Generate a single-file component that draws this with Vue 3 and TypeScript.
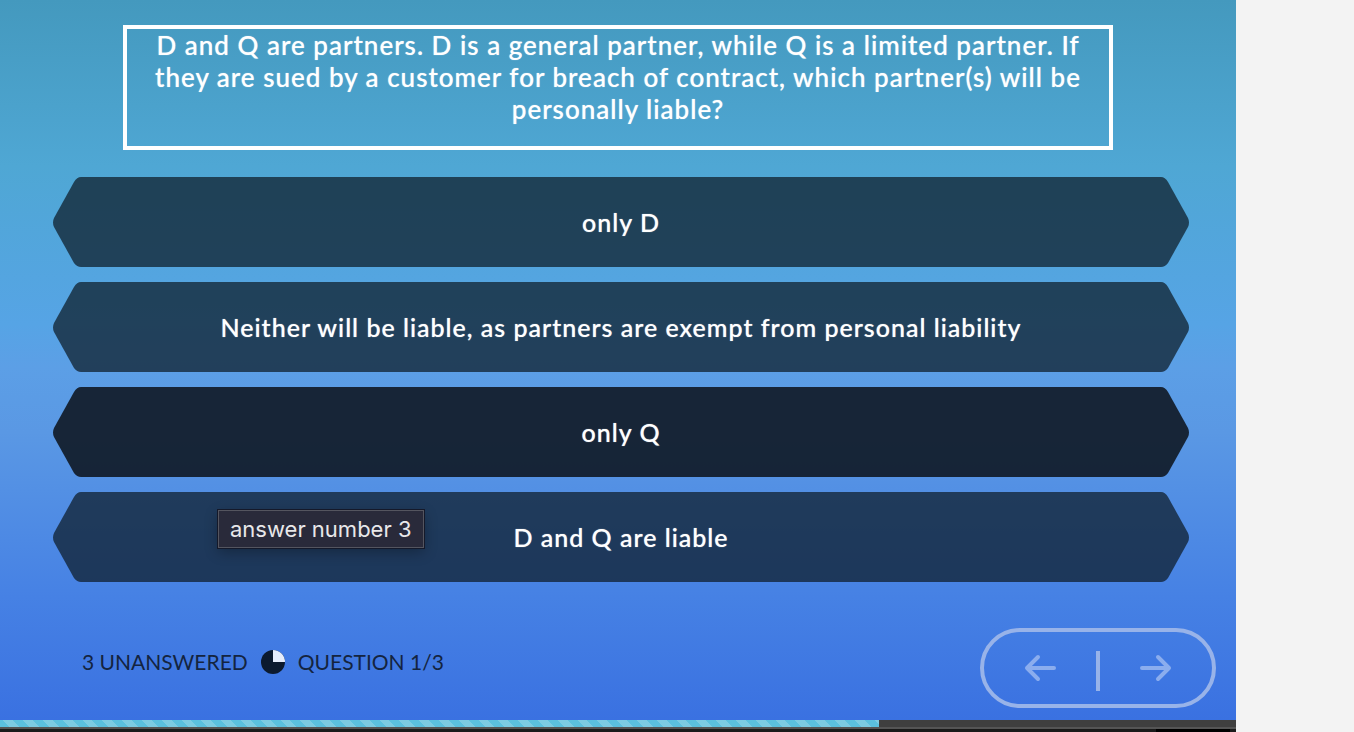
<script setup lang="ts">
import { ref } from 'vue'

const question =
  'D and Q are partners. D is a general partner, while Q is a limited partner. If they are sued by a customer for breach of contract, which partner(s) will be personally liable?'

const answers: string[] = [
  'only D',
  'Neither will be liable, as partners are exempt from personal liability',
  'only Q',
  'D and Q are liable',
]

const active = ref(2)
const progress = ref(71.1)
</script>

<template>
  <div class="page">
    <main class="stage">
      <section class="quiz">
        <h1 class="question">{{ question }}</h1>

        <div class="answers">
          <button
            v-for="(answer, index) in answers"
            :key="answer"
            type="button"
            class="answer"
            :class="{ active: index === active }"
            @mouseenter="active = index"
          >
            <svg class="cap" viewBox="0 0 28 90" aria-hidden="true">
              <path d="M28 0Q24 0 21 5L1 41Q-1 45.500 1 50L21 86Q24 90 28 90Z" />
            </svg>
            <span class="label">{{ answer }}</span>
            <svg class="cap" viewBox="0 0 28 90" aria-hidden="true">
              <path d="M0 0Q4 0 7 5L27 41Q29 45.500 27 50L7 86Q4 90 0 90Z" />
            </svg>
          </button>
          <div class="tooltip" role="tooltip">answer number 3</div>
        </div>

        <footer class="footer">
          <div class="status">
            <span>3 UNANSWERED</span>
            <svg class="pie" viewBox="0 0 24 24" aria-hidden="true">
              <circle cx="12" cy="12" r="12" fill="#0c1a2e" />
              <path d="M12 12V0A12 12 0 0 1 24 12Z" fill="#e6edfb" />
            </svg>
            <span>QUESTION 1/3</span>
          </div>
          <nav class="pager" aria-label="Questions">
            <button type="button" aria-label="Previous question">
              <svg viewBox="0 0 32 28" aria-hidden="true">
                <path d="M30 14H3M14 3L3 14L14 25" />
              </svg>
            </button>
            <span class="divider"></span>
            <button type="button" aria-label="Next question">
              <svg viewBox="0 0 32 28" aria-hidden="true">
                <path d="M2 14H29M18 3L29 14L18 25" />
              </svg>
            </button>
          </nav>
        </footer>
      </section>

      <div class="track">
        <div class="fill" :style="{ width: progress + '%' }"></div>
      </div>
      <div class="edge"><span></span></div>
    </main>
    <aside class="side"></aside>
  </div>
</template>

<style>
body {
  margin: 0;
}
</style>

<style scoped>
.page {
  display: flex;
  min-height: 100vh;
  background: #f3f3f3;
  font-family: Lato, 'Liberation Sans', sans-serif;
}

.stage {
  flex: 1;
  display: flex;
  flex-direction: column;
}

.side {
  width: 118px;
}

.quiz {
  flex: 1;
  display: flex;
  flex-direction: column;
  padding: 25px 20px 12px;
  background: linear-gradient(#4499be 0%, #4fa7d4 23%, #56a4e5 45%, #5c9fe6 51%, #5a98e4 60%, #4681e4 83%, #3a71e1 100%);
}

.question {
  box-sizing: border-box;
  min-height: 125px;
  margin: 0 103px;
  padding: 0 24px;
  border: 4px solid #fff;
  color: #fff;
  font-size: 26px;
  font-weight: 500;
  line-height: 32px;
  letter-spacing: 1px;
  text-align: center;
  text-shadow: 0 0 1px rgba(255, 255, 255, 0.7);
}

.answers {
  position: relative;
  display: grid;
  gap: 15px;
  margin: 27px 27px 0 33px;
}

.answer {
  display: flex;
  height: 90px;
  padding: 0;
  border: 0;
  background: none;
  color: #fff;
  fill: rgba(13, 26, 37, 0.72);
  font: inherit;
  font-size: 25px;
  font-weight: 500;
  letter-spacing: 1px;
  text-shadow: 0 0 1px rgba(255, 255, 255, 0.7);
  cursor: pointer;
}

.cap {
  flex: none;
  width: 28px;
  height: 90px;
}

.label {
  flex: 1;
  background: rgba(13, 26, 37, 0.72);
  line-height: 90px;
}

.active {
  fill: rgba(15, 24, 35, 0.9);
}

.active .label {
  background: rgba(15, 24, 35, 0.9);
}

.tooltip {
  position: absolute;
  left: 165px;
  top: 333px;
  padding: 0 11px;
  border: 1px solid #54555f;
  outline: 1px solid #14192a;
  background: #292a3a;
  box-shadow: 0 4px 14px rgba(0, 0, 0, 0.3);
  color: #e8e8ea;
  font-family: Inter, 'Liberation Sans', sans-serif;
  font-size: 22px;
  line-height: 36px;
}

.footer {
  display: flex;
  align-items: flex-end;
  justify-content: space-between;
  margin-top: auto;
}

.status {
  display: flex;
  align-items: center;
  gap: 13px;
  margin: 0 0 34px 62px;
  color: #14243f;
  font-size: 21px;
  line-height: 24px;
}

.pie {
  width: 24px;
  height: 24px;
}

.pager {
  box-sizing: border-box;
  display: flex;
  align-items: center;
  width: 236px;
  height: 80px;
  padding-top: 2px;
  border: 4px solid #98b3e9;
  border-radius: 40px;
}

.pager button {
  flex: 1;
  height: 68px;
  padding: 0;
  border: 0;
  background: none;
  cursor: pointer;
}

.pager svg {
  width: 32px;
  height: 28px;
  fill: none;
  stroke: #8badee;
  stroke-width: 4;
  stroke-linecap: round;
  stroke-linejoin: round;
}

.divider {
  width: 4px;
  height: 40px;
  margin-top: 4px;
  background: #98b3e9;
}

.track {
  height: 7px;
  background: #3f3f3f;
}

.fill {
  height: 100%;
  background: repeating-linear-gradient(45deg, #5bc0de 0 7px, #7ccbe2 7px 14px);
}

.edge {
  display: flex;
  justify-content: flex-end;
  height: 3px;
  border-top: 2px solid #555;
  background: #1a1a1a;
}

.edge span {
  width: 74px;
  margin-right: 6px;
  background: #000;
}
</style>
